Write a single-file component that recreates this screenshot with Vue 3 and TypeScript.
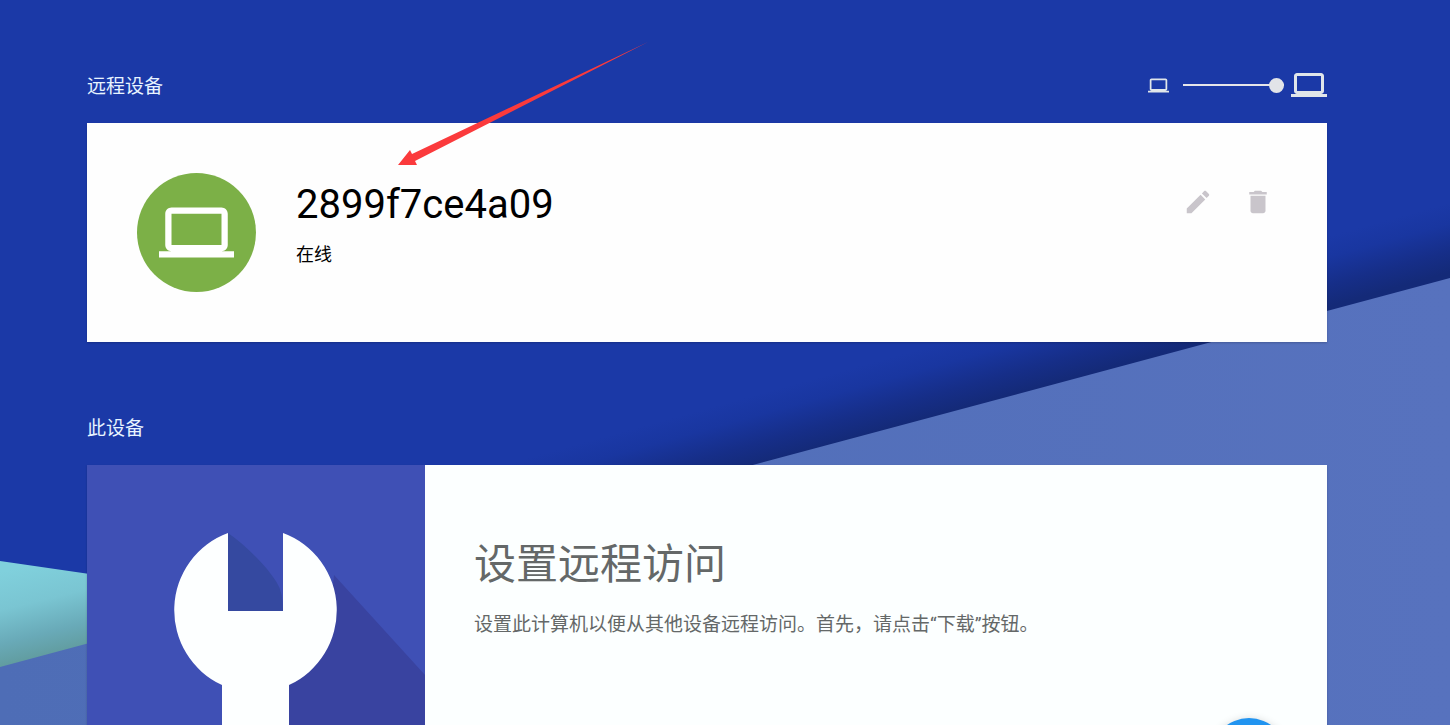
<script setup lang="ts">
import { ref } from 'vue'

const laptop =
  'M20 18c1.1 0 2-.9 2-2V6c0-1.1-.9-2-2-2H4c-1.1 0-2 .9-2 2v10c0 1.1.9 2 2 2H0v2h24v-2h-4zM4 6h16v10H4V6z'
const pencil =
  'M3 17.25V21h3.75L17.81 9.94l-3.75-3.75L3 17.25zM20.71 7.04c.39-.39.39-1.02 0-1.41l-2.34-2.34c-.39-.39-1.02-.39-1.41 0l-1.83 1.83 3.75 3.75 1.83-1.83z'
const trash = 'M6 19c0 1.1.9 2 2 2h8c1.1 0 2-.9 2-2V7H6v12zM19 4h-3.5l-1-1h-5l-1 1H5v2h14V4z'

interface Device {
  id: string
  name: string
  status: string
}

const devices: Device[] = [{ id: 'd1', name: '2899f7ce4a09', status: '在线' }]
const size = ref(100)
</script>

<template>
  <div class="page">
    <svg class="backdrop" viewBox="0 0 1450 725" preserveAspectRatio="none" aria-hidden="true">
      <defs>
        <linearGradient id="fold" gradientUnits="userSpaceOnUse" x1="755" y1="465" x2="737" y2="400">
          <stop offset="0" stop-color="#142a78" />
          <stop offset="0.3" stop-color="#162e88" />
          <stop offset="0.7" stop-color="#1936a0" />
          <stop offset="1" stop-color="#1b39a7" />
        </linearGradient>
        <linearGradient id="teal" gradientUnits="userSpaceOnUse" x1="30" y1="565" x2="52" y2="655">
          <stop offset="0" stop-color="#80d0dc" />
          <stop offset="0.4" stop-color="#7ac5d2" />
          <stop offset="0.75" stop-color="#69aab8" />
          <stop offset="1" stop-color="#619c9f" />
        </linearGradient>
        <linearGradient id="paper" x1="0" y1="0" x2="1" y2="0">
          <stop offset="0" stop-color="#4e6db6" />
          <stop offset="1" stop-color="#5772be" />
        </linearGradient>
      </defs>
      <rect width="1450" height="725" fill="url(#fold)" />
      <rect width="400" height="725" fill="#1b39a7" />
      <polygon points="0,561 200,590 200,725 0,725" fill="url(#teal)" />
      <polygon points="0,667 1450,278 1450,725 0,725" fill="url(#paper)" />
    </svg>

    <main class="content">
      <section>
        <header class="section-head">
          <h2>远程设备</h2>
          <div class="zoom">
            <svg class="small-icon" viewBox="0 0 24 24" aria-hidden="true"><path :d="laptop" /></svg>
            <input v-model.number="size" type="range" min="0" max="100" aria-label="图标大小" />
            <svg class="large-icon" viewBox="0 0 24 24" aria-hidden="true"><path :d="laptop" /></svg>
          </div>
        </header>
        <article v-for="device in devices" :key="device.id" class="card device">
          <div class="avatar">
            <svg viewBox="0 0 24 24" aria-hidden="true"><path :d="laptop" /></svg>
          </div>
          <div class="info">
            <h3>{{ device.name }}</h3>
            <p>{{ device.status }}</p>
          </div>
          <div class="actions">
            <button type="button" aria-label="修改">
              <svg viewBox="0 0 24 24" aria-hidden="true"><path :d="pencil" /></svg>
            </button>
            <button type="button" aria-label="删除">
              <svg viewBox="0 0 24 24" aria-hidden="true"><path :d="trash" /></svg>
            </button>
          </div>
        </article>
      </section>

      <section>
        <header class="section-head">
          <h2>此设备</h2>
        </header>
        <article class="card setup">
          <div class="art">
            <svg viewBox="0 0 338 340" aria-hidden="true">
              <path d="M141 68C158 80 180 101 190 118Q196 127 196 146H141Z" fill="#3549a0" />
              <path d="M247 110L338 210V340H202V219L240 180Z" fill="#3943a0" />
              <path
                d="M141 68A81 82 0 0 0 135 220V340H202V220A81 82 0 0 0 196 68V146H141Z"
                fill="#fdffff"
              />
            </svg>
          </div>
          <div class="setup-body">
            <h3>设置远程访问</h3>
            <p>设置此计算机以便从其他设备远程访问。首先，请点击“下载”按钮。</p>
            <button type="button" class="fab" aria-label="下载">
              <svg viewBox="0 0 24 24" aria-hidden="true"><path d="M19 9h-4V3H9v6H5l7 7 7-7zM5 18v2h14v-2H5z" /></svg>
            </button>
          </div>
        </article>
      </section>
    </main>

    <svg class="pointer" viewBox="0 0 252 124" aria-hidden="true">
      <path d="M0 123L12 108L14 112L250 0L17 119L19 123Z" fill="#fb3a3c" />
    </svg>
  </div>
</template>

<style>
body {
  margin: 0;
}
</style>

<style scoped>
.page {
  position: relative;
  height: 100vh;
  overflow: hidden;
  background: #1b39a7;
  font-family: Roboto, "Noto Sans CJK SC", sans-serif;
}

.backdrop {
  position: absolute;
  inset: 0;
  width: 100%;
  height: 100%;
}

.content {
  position: relative;
  display: flex;
  flex-direction: column;
  gap: 49px;
  padding: 49px 123px 0 87px;
}

h2,
h3,
p {
  margin: 0;
  font-weight: 400;
}

.section-head {
  display: flex;
  align-items: center;
  justify-content: space-between;
  height: 74px;
  color: #e8f4ff;
}

.section-head h2 {
  padding-top: 2px;
  font-size: 19px;
  line-height: 24px;
}

.zoom {
  display: flex;
  align-items: center;
  padding-bottom: 2px;
  fill: #e0e6ea;
}

.small-icon {
  width: 21px;
  height: 21px;
  margin-right: 14px;
}

.large-icon {
  width: 36px;
  height: 36px;
  margin-left: 7px;
}

.zoom input {
  appearance: none;
  width: 101px;
  height: 16px;
  margin: 0;
  background: linear-gradient(#e6e6ea, #e6e6ea) center / 100% 2px no-repeat;
}

.zoom input::-webkit-slider-thumb {
  appearance: none;
  width: 15px;
  height: 15px;
  border-radius: 50%;
  background: #e2e4e8;
}

.card {
  display: flex;
  background: #fefefe;
  box-shadow: 0 1px 2px rgba(0, 0, 0, 0.2);
}

.device {
  box-sizing: border-box;
  min-height: 219px;
  padding: 50px 39px 49px 50px;
}

.avatar {
  display: flex;
  align-items: center;
  justify-content: center;
  width: 119px;
  height: 119px;
  margin-right: 40px;
  border-radius: 50%;
  background: #7cb047;
  fill: #fff;
}

.avatar svg {
  width: 75px;
  height: 75px;
}

.info {
  flex: 1;
  padding-top: 8px;
  color: #000;
}

.info h3 {
  font-size: 40px;
  line-height: 48px;
}

.info p {
  margin-top: 14px;
  font-size: 18px;
  line-height: 24px;
}

.actions {
  display: flex;
  align-items: flex-start;
}

.actions button {
  padding: 14px 15px;
  border: 0;
  background: none;
  line-height: 0;
  cursor: pointer;
}

.actions svg {
  width: 30px;
  height: 30px;
  fill: #c9c5cb;
}

.setup {
  background: #fcffff;
}

.art {
  flex: none;
  width: 338px;
  background: #3f50b5;
}

.art svg {
  display: block;
  width: 100%;
}

.setup-body {
  flex: 1;
  display: flex;
  flex-direction: column;
  padding: 70px 40px 11px 49px;
  color: #646868;
}

.setup-body h3 {
  font-size: 42px;
  line-height: 60px;
}

.setup-body p {
  margin-top: 16px;
  font-size: 19px;
  line-height: 28px;
}

.fab {
  align-self: flex-end;
  width: 76px;
  height: 76px;
  margin-top: 79px;
  border: 0;
  border-radius: 50%;
  background: #2194f0;
  box-shadow: 0 2px 10px rgba(0, 0, 0, 0.2);
  cursor: pointer;
}

.fab svg {
  width: 30px;
  height: 30px;
  fill: #fff;
}

.pointer {
  position: absolute;
  left: 398px;
  top: 42px;
  width: 252px;
  height: 124px;
  pointer-events: none;
}
</style>
